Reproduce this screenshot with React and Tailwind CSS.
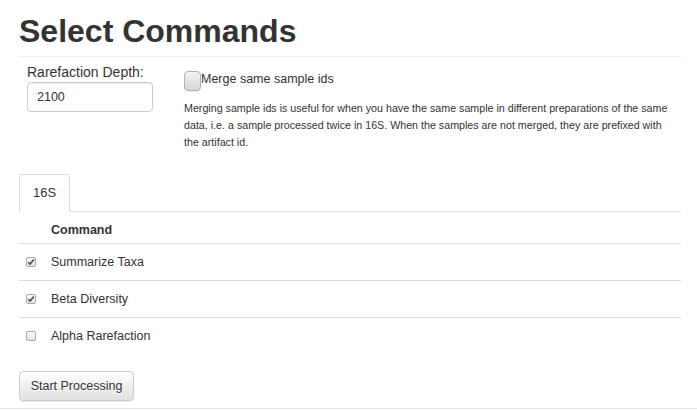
import React from "react";

const commands = [
  { name: "Summarize Taxa", checked: true },
  { name: "Beta Diversity", checked: true },
  { name: "Alpha Rarefaction", checked: false },
];

function SmallCheck({ checked }) {
  return (
    <div className="w-[10px] h-[10px] rounded-[2px] border border-[#a9a9a9] bg-gradient-to-b from-[#fdfdfd] to-[#e3e3e3] flex items-center justify-center">
      {checked && (
        <svg width="8" height="8" viewBox="0 0 8 8">
          <path d="M1.3 4.2 L3.1 6 L6.8 1.6" fill="none" stroke="#4a4a4a" strokeWidth="1.6" />
        </svg>
      )}
    </div>
  );
}

export default function App() {
  return (
    <div className="w-[697px] h-[410px] bg-white text-[#333] overflow-hidden font-['Liberation_Sans',Arial,sans-serif]">
      <div className="pl-[19px] pr-[16px]">
        {/* page header */}
        <h1 className="pt-[14px] pb-[7px] border-b border-[#eee] text-[32px] leading-[35px] font-bold">
          Select Commands
        </h1>

        {/* options */}
        <div className="flex">
          <div className="w-[165px] pl-[8px] pt-[5px]">
            <div className="text-[14px] leading-[20px]">Rarefaction Depth:</div>
            <div className="w-[126px] h-[30px] border border-[#ccc] rounded-[4px] shadow-[inset_0_1px_1px_rgba(0,0,0,0.075)] flex items-center pl-[9px] text-[12.5px]">
              2100
            </div>
          </div>
          <div className="flex-1 pt-[13px]">
            <div className="flex items-start">
              <div className="mt-[1px] w-[17px] h-[20px] rounded-[4px] border border-[#b3b3b3] bg-gradient-to-b from-[#f4f4f4] to-[#d6d6d6] shadow-[0_1px_0_rgba(0,0,0,0.08)]" />
              <span className="text-[12.5px] leading-[18px]">Merge same sample ids</span>
            </div>
            <p className="mt-[9px] text-[10.7px] leading-[17px] whitespace-nowrap">
              Merging sample ids is useful for when you have the same sample in different preparations of the same
              <br />
              data, i.e. a sample processed twice in 16S. When the samples are not merged, they are prefixed with
              <br />
              the artifact id.
            </p>
          </div>
        </div>

        {/* tabs */}
        <div className="mt-[23px] flex border-b border-[#ddd]">
          <div className="-mb-px px-[13px] pt-[8px] pb-[8px] border border-[#ddd] border-b-transparent rounded-t-[4px] bg-white text-[13px] leading-[20px]">
            16S
          </div>
        </div>

        {/* command table */}
        <div className="text-[12.5px]">
          <div className="flex h-[32px] pt-[8px] border-b border-[#ddd]">
            <div className="w-[32px]" />
            <div className="font-bold leading-[20px]">Command</div>
          </div>
          {commands.map((c, i) => (
            <div
              key={c.name}
              className={
                i < commands.length - 1
                  ? "flex items-center h-[37px] border-b border-[#ddd]"
                  : "flex items-center h-[36px]"
              }
            >
              <div className="w-[32px] pl-[7px]">
                <SmallCheck checked={c.checked} />
              </div>
              <div className="leading-[20px]">{c.name}</div>
            </div>
          ))}
        </div>

        <div className="mt-[17px] h-[37px]">
          <button className="w-[115px] h-[30px] border border-[#ccc] rounded-[4px] bg-gradient-to-b from-white to-[#e0e0e0] shadow-[0_1px_1px_rgba(0,0,0,0.075)] text-[12.5px] leading-[18px] text-[#333] [text-shadow:0_1px_0_#fff]">
            Start Processing
          </button>
        </div>
      </div>
      <div className="border-t border-[#e6e6e6]" />
    </div>
  );
}
